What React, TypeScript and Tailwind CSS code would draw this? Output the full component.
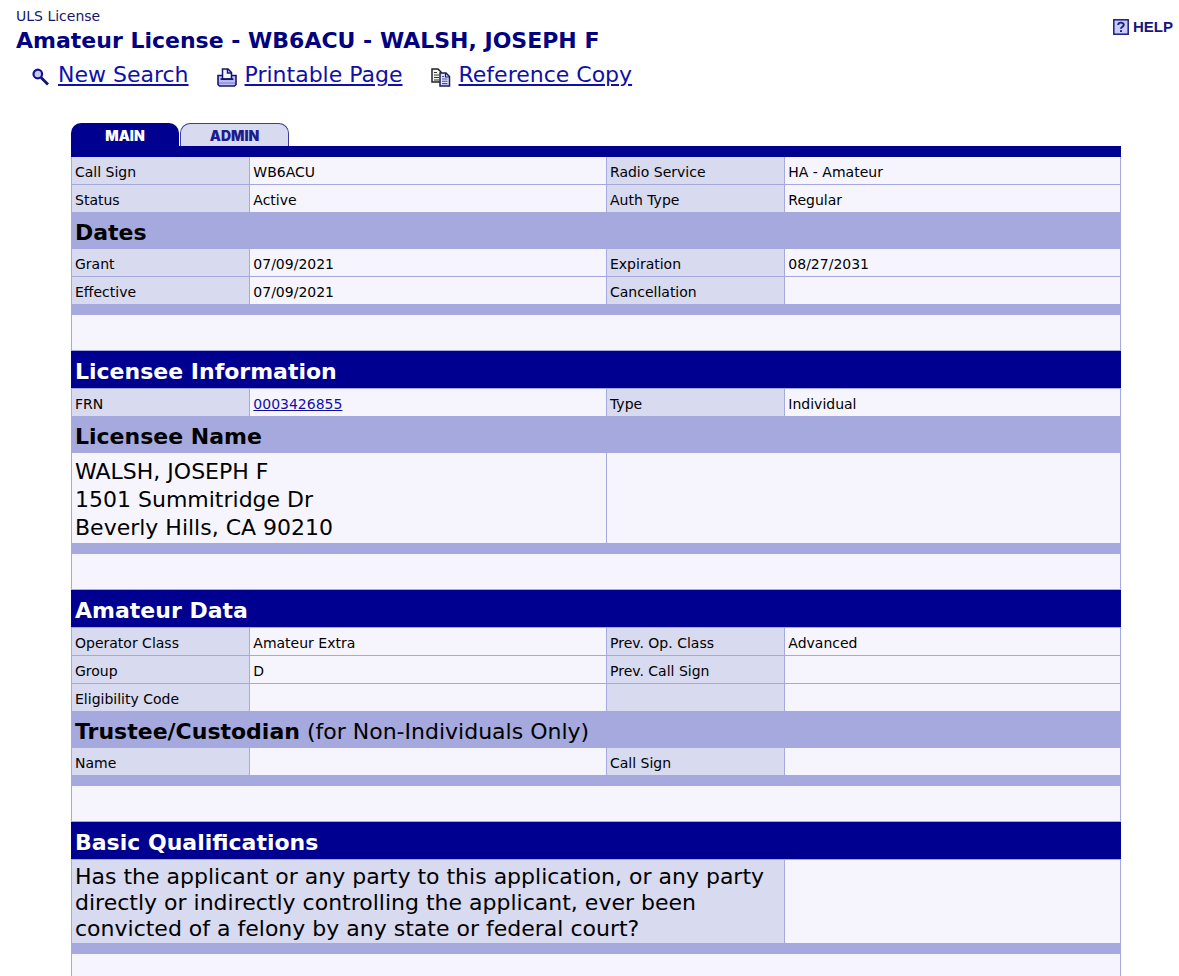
import cn from 'clsx';
import React from 'react';

type Field = {
  label: string;
  value?: string;
  href?: string;
};

const CELL = 'border border-[#a5a9dd] px-[3px]';

const SearchIcon = () => (
  <svg className="w-[18px] h-[18px]" viewBox="0 0 18 18" aria-hidden="true">
    <path d="M9 9.5L16 16.5" stroke="#14146e" strokeWidth="2.8" />
    <circle
      cx="5.8"
      cy="6"
      r="4.3"
      fill="#c4c8f4"
      stroke="#14148c"
      strokeWidth="2.2"
    />
  </svg>
);

const PrinterIcon = () => (
  <svg className="w-[20px] h-[19px]" viewBox="0 0 20 19" aria-hidden="true">
    <path
      d="M1 7.5H19V16.5L17.5 18H2.5L1 16.5Z"
      fill="#c4c8f6"
      stroke="#14146e"
      strokeWidth="1.6"
    />
    <path d="M2 15H18" stroke="#9a9ee4" strokeWidth="2.4" />
    <path
      d="M5.5 11V1H11L14.5 4.5V11Z"
      fill="#f4f4ff"
      stroke="#14146e"
      strokeWidth="1.5"
    />
    <path d="M10.5 1V5H14.5" fill="none" stroke="#14146e" strokeWidth="1.5" />
    <path d="M3.5 11.2H16.5" stroke="#14146e" strokeWidth="1.8" />
  </svg>
);

const CopyIcon = () => (
  <svg className="w-[20px] h-[19px]" viewBox="0 0 20 19" aria-hidden="true">
    <path
      d="M1 1H7L10 4V14H1Z"
      fill="#f4f4f4"
      stroke="#222"
      strokeWidth="1.5"
    />
    <path d="M3 4.5H6M3 7H8M3 9.5H8M3 12H8" stroke="#333" strokeWidth="1.1" />
    <path
      d="M9 5H15L18.5 8.5V18H9Z"
      fill="#dfe2fb"
      stroke="#1c1c50"
      strokeWidth="1.5"
    />
    <path d="M14.5 5V9H18.5" fill="none" stroke="#1c1c50" strokeWidth="1.2" />
    <path
      d="M11 8.5H13M11 11H16.5M11 13.3H16.5M11 15.6H16.5"
      stroke="#4a4fae"
      strokeWidth="1.1"
    />
  </svg>
);

const HelpIcon = () => (
  <svg className="w-[16px] h-[16px]" viewBox="0 0 16 16" aria-hidden="true">
    <rect
      x="0.8"
      y="0.8"
      width="14.4"
      height="14.4"
      fill="#c9ccf5"
      stroke="#1c1c84"
      strokeWidth="1.5"
    />
    <path
      d="M5.2 6C5.2 2.8 10.8 2.9 10.8 5.8C10.8 7.8 8 7.6 8 9.8"
      fill="none"
      stroke="#1c1c84"
      strokeWidth="1.9"
    />
    <path d="M7 11.2H9V13.1H7Z" fill="#1c1c84" />
  </svg>
);

const toolbar = [
  { name: 'New Search', Icon: SearchIcon },
  { name: 'Printable Page', Icon: PrinterIcon },
  { name: 'Reference Copy', Icon: CopyIcon },
];

const FieldRow = ({ left, right }: { left: Field; right?: Field }) => (
  <tr className="h-[28px] text-[14px] leading-[20px]">
    {[left, right].map((field, i) => (
      <React.Fragment key={i}>
        <th
          scope="row"
          className={cn(CELL, 'bg-[#d8daf0] pt-0.5 text-left font-normal')}
        >
          {field?.label}
        </th>
        <td className={cn(CELL, 'bg-[#f6f5fe] pt-0.5')}>
          {field?.href ? (
            <a href={field.href} className="text-[#1010a8] underline">
              {field.value}
            </a>
          ) : (
            field?.value
          )}
        </td>
      </React.Fragment>
    ))}
  </tr>
);

const SectionRow = ({ title }: { title: string }) => (
  <tr className="h-[38px]">
    <th
      colSpan={4}
      className="border-y border-y-[#a5a9dd] border-x border-x-[#000090] bg-[#000090] px-[3px] pt-1 text-left text-white text-[22px] leading-[28px] font-bold"
    >
      {title}
    </th>
  </tr>
);

const SubRow = ({ title, note }: { title: string; note?: string }) => (
  <tr className="h-[36px]">
    <th
      colSpan={4}
      className={cn(
        CELL,
        'bg-[#a5a9dd] pt-1 text-left text-[22px] leading-[28px] font-bold',
      )}
    >
      {title}
      {note && <span className="font-normal"> {note}</span>}
    </th>
  </tr>
);

const SectionEnd = () => (
  <>
    <tr className="h-[10px]">
      <td colSpan={4} className={cn(CELL, 'bg-[#a5a9dd]')} />
    </tr>
    <tr className="h-[36px]">
      <td colSpan={4} className={cn(CELL, 'bg-[#f6f5fe]')} />
    </tr>
  </>
);

const App = () => {
  return (
    <div className="h-screen overflow-hidden bg-white text-black font-['DejaVu_Sans',sans-serif]">
      <header className="flex justify-between pl-4 pr-[6px] pt-[6px]">
        <div>
          <p className="text-[14px] leading-[20px] text-[#16166e]">
            ULS License
          </p>
          <h1 className="text-[22px] leading-[30px] font-bold text-[#000080]">
            Amateur License - WB6ACU - WALSH, JOSEPH F
          </h1>
          <nav className="flex gap-[28px] pl-4 pt-[3px] text-[22px] leading-[32px]">
            {toolbar.map(({ name, Icon }) => (
              <a
                key={name}
                href="#"
                className="flex items-center gap-2 text-[#1010a8]"
              >
                <span className="pt-1">
                  <Icon />
                </span>
                <span className="underline">{name}</span>
              </a>
            ))}
          </nav>
        </div>
        <a
          href="#"
          className="flex items-center gap-1 h-[16px] mt-[13px] text-[15px] font-bold text-[#16167c] font-['Liberation_Sans',sans-serif]"
        >
          <HelpIcon />
          HELP
        </a>
      </header>

      <main className="mt-[32px] ml-[71px] mr-[58px]">
        <div className="flex gap-px h-[23px] text-[14px] leading-[25px] font-black font-['Inter',sans-serif]">
          <a
            href="#"
            className="w-[108px] rounded-t-[10px] bg-[#000090] text-center text-white"
          >
            MAIN
          </a>
          <a
            href="#"
            className="w-[109px] rounded-t-[10px] border border-b-0 border-[#3c3c98] bg-[#d8daf0] text-center leading-[23px] text-[#1c1c8c]"
          >
            ADMIN
          </a>
        </div>
        <table className="w-full table-fixed border-collapse">
          <colgroup>
            <col className="w-[17%]" />
            <col className="w-[34%]" />
            <col className="w-[17%]" />
            <col className="w-[32%]" />
          </colgroup>
          <tbody>
            <tr className="h-[10px]">
              <td
                colSpan={4}
                className="border border-[#000090] bg-[#000090] p-0"
              />
            </tr>
            <FieldRow
              left={{ label: 'Call Sign', value: 'WB6ACU' }}
              right={{ label: 'Radio Service', value: 'HA - Amateur' }}
            />
            <FieldRow
              left={{ label: 'Status', value: 'Active' }}
              right={{ label: 'Auth Type', value: 'Regular' }}
            />
            <SubRow title="Dates" />
            <FieldRow
              left={{ label: 'Grant', value: '07/09/2021' }}
              right={{ label: 'Expiration', value: '08/27/2031' }}
            />
            <FieldRow
              left={{ label: 'Effective', value: '07/09/2021' }}
              right={{ label: 'Cancellation' }}
            />
            <SectionEnd />

            <SectionRow title="Licensee Information" />
            <FieldRow
              left={{ label: 'FRN', value: '0003426855', href: '#' }}
              right={{ label: 'Type', value: 'Individual' }}
            />
            <SubRow title="Licensee Name" />
            <tr className="h-[91px] text-[22px] leading-[28px]">
              <td colSpan={2} className={cn(CELL, 'bg-[#f6f5fe] pt-1')}>
                WALSH, JOSEPH F<br />
                1501 Summitridge Dr
                <br />
                Beverly Hills, CA 90210
              </td>
              <td colSpan={2} className={cn(CELL, 'bg-[#f6f5fe]')} />
            </tr>
            <SectionEnd />

            <SectionRow title="Amateur Data" />
            <FieldRow
              left={{ label: 'Operator Class', value: 'Amateur Extra' }}
              right={{ label: 'Prev. Op. Class', value: 'Advanced' }}
            />
            <FieldRow
              left={{ label: 'Group', value: 'D' }}
              right={{ label: 'Prev. Call Sign' }}
            />
            <FieldRow left={{ label: 'Eligibility Code' }} />
            <SubRow
              title="Trustee/Custodian"
              note="(for Non-Individuals Only)"
            />
            <FieldRow left={{ label: 'Name' }} right={{ label: 'Call Sign' }} />
            <SectionEnd />

            <SectionRow title="Basic Qualifications" />
            <tr className="h-[84px] text-[22px] leading-[26px]">
              <th
                scope="row"
                colSpan={3}
                className={cn(CELL, 'bg-[#d8daf0] pt-0.5 text-left font-normal')}
              >
                Has the applicant or any party to this application, or any party
                directly or indirectly controlling the applicant, ever been
                convicted of a felony by any state or federal court?
              </th>
              <td className={cn(CELL, 'bg-[#f6f5fe]')} />
            </tr>
            <SectionEnd />
          </tbody>
        </table>
      </main>
    </div>
  );
};

export default App;
